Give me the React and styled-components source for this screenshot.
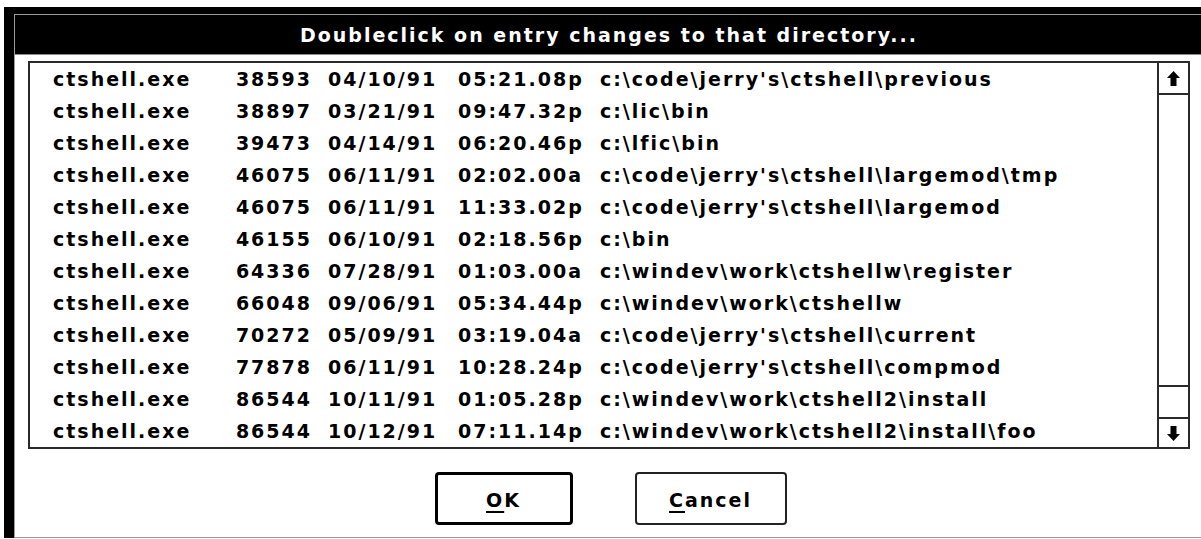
import styled, { createGlobalStyle } from "styled-components";

const GlobalStyle = createGlobalStyle`
  html, body {
    margin: 0;
    padding: 0;
    background: #fff;
    overflow: hidden;
  }
  body {
    font-family: "DejaVu Sans", "Liberation Sans", sans-serif;
    font-weight: bold;
    font-size: 19px;
    letter-spacing: 2px;
    color: #000;
  }
`;

const Screen = styled.div`
  height: 539px;
  padding: 7px 0 0 4px;
  box-sizing: border-box;
  overflow: hidden;
`;

const Frame = styled.div`
  width: 1209px;
  height: 531px;
  box-sizing: border-box;
  border-left: 10px solid #000;
  border-right: 10px solid #000;
  border-top: 7px solid #000;
  display: flex;
`;

const Inner = styled.div`
  flex: 1;
  display: flex;
  flex-direction: column;
  border: 1px solid #9a9a9a;
  border-right: none;
`;

const TitleBar = styled.div`
  height: 38px;
  flex-shrink: 0;
  background: #000;
  color: #fff;
  border-bottom: 1px solid #8a8a8a;
  display: flex;
  align-items: center;
  justify-content: center;
  padding-top: 1px;
  box-sizing: content-box;
`;

const Body = styled.div`
  flex: 1;
  display: flex;
  flex-direction: column;
  padding: 6px 13px 0 13px;
`;

const ListBox = styled.div`
  height: 388px;
  box-sizing: border-box;
  border: 2px solid #2a2a2a;
  display: flex;
`;

const Rows = styled.div`
  flex: 1;
  overflow: hidden;
`;

/* name | size (right aligned) | date | time | path */
const Row = styled.div`
  display: grid;
  grid-template-columns: 151px 92px 114px 126px 1fr;
  column-gap: 16px;
  height: 32px;
  align-items: center;
  padding-left: 23px;
  white-space: nowrap;
`;

const Size = styled.span`
  text-align: right;
`;

const ScrollBar = styled.div`
  width: 29px;
  border-left: 2px solid #2a2a2a;
  display: flex;
  flex-direction: column;
`;

const ArrowButton = styled.div`
  height: ${(p) => p.$h}px;
  display: flex;
  align-items: center;
  justify-content: center;
  border-bottom: ${(p) => (p.$line ? "2px solid #2a2a2a" : "none")};
`;

const Track = styled.div`
  flex: 1;
`;

const Thumb = styled.div`
  height: 30px;
  border-top: 2px solid #2a2a2a;
  border-bottom: 2px solid #2a2a2a;
`;

const ButtonRow = styled.div`
  display: flex;
  justify-content: center;
  gap: 62px;
  margin-top: 23px;
  padding-left: 3px;
`;

const Button = styled.div`
  width: ${(p) => p.$w}px;
  height: 53px;
  box-sizing: border-box;
  border: ${(p) => (p.$default ? "3px solid #000" : "2px solid #222")};
  border-radius: 4px;
  display: flex;
  align-items: center;
  justify-content: center;
  padding-top: 2px;

  u {
    text-decoration-thickness: 2px;
    text-underline-offset: 4px;
  }
`;

const Arrow = ({ down }) => (
  <svg width="13" height="15" viewBox="0 0 13 15">
    <g transform={down ? "rotate(180 6.5 7.5)" : undefined}>
      <polygon points="6.5,0 13,7 9.5,7 9.5,15 3.5,15 3.5,7 0,7" fill="#000" />
    </g>
  </svg>
);

const entries = [
  ["38593", "04/10/91", "05:21.08p", String.raw`c:\code\jerry's\ctshell\previous`],
  ["38897", "03/21/91", "09:47.32p", String.raw`c:\lic\bin`],
  ["39473", "04/14/91", "06:20.46p", String.raw`c:\lfic\bin`],
  ["46075", "06/11/91", "02:02.00a", String.raw`c:\code\jerry's\ctshell\largemod\tmp`],
  ["46075", "06/11/91", "11:33.02p", String.raw`c:\code\jerry's\ctshell\largemod`],
  ["46155", "06/10/91", "02:18.56p", String.raw`c:\bin`],
  ["64336", "07/28/91", "01:03.00a", String.raw`c:\windev\work\ctshellw\register`],
  ["66048", "09/06/91", "05:34.44p", String.raw`c:\windev\work\ctshellw`],
  ["70272", "05/09/91", "03:19.04a", String.raw`c:\code\jerry's\ctshell\current`],
  ["77878", "06/11/91", "10:28.24p", String.raw`c:\code\jerry's\ctshell\compmod`],
  ["86544", "10/11/91", "01:05.28p", String.raw`c:\windev\work\ctshell2\install`],
  ["86544", "10/12/91", "07:11.14p", String.raw`c:\windev\work\ctshell2\install\foo`],
];

export default function App() {
  return (
    <>
      <GlobalStyle />
      <Screen>
        <Frame>
          <Inner>
            <TitleBar>Doubleclick on entry changes to that directory...</TitleBar>
            <Body>
              <ListBox>
                <Rows>
                  {entries.map(([size, date, time, path], i) => (
                    <Row key={i}>
                      <span>ctshell.exe</span>
                      <Size>{size}</Size>
                      <span>{date}</span>
                      <span>{time}</span>
                      <span>{path}</span>
                    </Row>
                  ))}
                </Rows>
                <ScrollBar>
                  <ArrowButton $h={30} $line>
                    <Arrow />
                  </ArrowButton>
                  <Track />
                  <Thumb />
                  <ArrowButton $h={28}>
                    <Arrow down />
                  </ArrowButton>
                </ScrollBar>
              </ListBox>
              <ButtonRow>
                <Button $w={138} $default>
                  <span>
                    <u>O</u>K
                  </span>
                </Button>
                <Button $w={152}>
                  <span>
                    <u>C</u>ancel
                  </span>
                </Button>
              </ButtonRow>
            </Body>
          </Inner>
        </Frame>
      </Screen>
    </>
  );
}
